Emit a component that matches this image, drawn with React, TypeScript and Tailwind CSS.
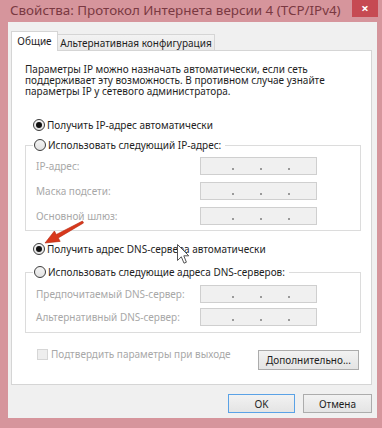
import React from "react";

const Radio = ({ checked }: { checked?: boolean }) => (
  <span className="w-[12px] h-[12px] rounded-full border border-[#3c3c3c] bg-gradient-to-b from-[#f4f4f4] to-[#e2e2e2] flex items-center justify-center shrink-0">
    {checked && <span className="w-[6px] h-[6px] rounded-full bg-[#111]" />}
  </span>
);

const IpBox = () => (
  <div className="w-[117px] h-[18px] border border-[#cfcfcf] bg-[#f0f0f0] flex items-end pl-[31px] gap-[26px] pb-[4px]">
    <span className="w-[2px] h-[2px] bg-[#9a9a9a]" />
    <span className="w-[2px] h-[2px] bg-[#9a9a9a]" />
    <span className="w-[2px] h-[2px] bg-[#9a9a9a]" />
  </div>
);

const FieldRow = ({ label }: { label: string }) => (
  <div className="flex items-center">
    <span className="w-[164px] text-[#a8a8a8] whitespace-nowrap">{label}</span>
    <IpBox />
  </div>
);

export default function App() {
  return (
    <div
      className="w-[382px] h-[428px] bg-[#d6959c] flex flex-col relative overflow-hidden"
      style={{ fontFamily: '"Noto Sans", "Open Sans", sans-serif' }}
    >
      {/* Title bar */}
      <div className="h-[22px] flex items-start shrink-0">
        <div className="pl-[10px] pt-[1px] text-[13.4px] leading-[19px] text-[#7a3942] whitespace-nowrap">
          Свойства: Протокол Интернета версии 4 (TCP/IPv4)
        </div>
        <div className="ml-auto mr-[4px] w-[26px] h-[17px] bg-[#c64a52] flex items-center justify-center text-white text-[13px] leading-none font-bold">
          ×
        </div>
      </div>

      {/* Client */}
      <div className="ml-[8px] mr-[5px] h-[396px] bg-[#f0f0f0] flex flex-col text-[10px] leading-[12px] text-[#1e1e1e] shrink-0">
        {/* Tabs */}
        <div className="mt-[9px] ml-[3px] h-[20px] flex items-end">
          <div className="relative z-10 h-[20px] w-[47px] bg-white border-t border-x border-[#d5d5d5] flex items-center justify-center pb-[1px] whitespace-nowrap">
            Общие
          </div>
          <div className="h-[17px] w-[157px] bg-gradient-to-b from-[#f3f3f3] to-[#e8e8e8] border-t border-r border-[#d5d5d5] flex items-center justify-center whitespace-nowrap">
            Альтернативная конфигурация
          </div>
        </div>

        {/* Panel */}
        <div className="-mt-px ml-[3px] w-[361px] h-[335px] bg-white border border-[#d5d5d5] flex flex-col">
          <div className="mt-[13px] ml-[13px] flex flex-col leading-[11px] whitespace-nowrap">
            <span>Параметры IP можно назначать автоматически, если сеть</span>
            <span>поддерживает эту возможность. В противном случае узнайте</span>
            <span>параметры IP у сетевого администратора.</span>
          </div>

          <div className="mt-[21px] ml-[21px] h-[14px] flex items-center gap-[2px]">
            <Radio checked />
            <span>Получить IP-адрес автоматически</span>
          </div>

          <fieldset className="mt-[6px] ml-[13px] w-[336px] border border-[#dcdcdc] px-0 pb-[5px]">
            <legend className="ml-[7px] pl-[1px] pr-[4px] h-[14px] flex items-center gap-[2px]">
              <Radio />
              <span>Использовать следующий IP-адрес:</span>
            </legend>
            <div className="mt-[5px] pl-[10px] flex flex-col gap-[7px]">
              <FieldRow label="IP-адрес:" />
              <FieldRow label="Маска подсети:" />
              <FieldRow label="Основной шлюз:" />
            </div>
          </fieldset>

          <div className="mt-[11px] ml-[21px] h-[14px] flex items-center gap-[2px]">
            <Radio checked />
            <span>Получить адрес DNS-сервера автоматически</span>
          </div>

          <fieldset className="mt-[9px] ml-[13px] w-[336px] border border-[#dcdcdc] px-0 pb-[6px]">
            <legend className="ml-[7px] pl-[1px] pr-[4px] h-[14px] flex items-center gap-[2px]">
              <Radio />
              <span>Использовать следующие адреса DNS-серверов:</span>
            </legend>
            <div className="mt-[6px] pl-[10px] flex flex-col gap-[5px]">
              <FieldRow label="Предпочитаемый DNS-сервер:" />
              <FieldRow label="Альтернативный DNS-сервер:" />
            </div>
          </fieldset>

          <div className="mt-[16px] ml-[25px] mr-[12px] flex items-start">
            <span className="w-[11px] h-[11px] border border-[#d6d6d6] bg-[#eeeeee] shrink-0" />
            <span className="ml-[3px] -mt-[1px] text-[#a8a8a8] whitespace-nowrap">Подтвердить параметры при выходе</span>
            <div className="ml-auto mt-[1px] w-[101px] h-[20px] border border-[#acacac] bg-gradient-to-b from-[#f2f2f2] to-[#e4e4e4] flex items-center justify-center">
              Дополнительно...
            </div>
          </div>
        </div>

        {/* Bottom buttons */}
        <div className="mt-[9px] mr-[5px] flex justify-end gap-[8px]">
          <div className="w-[67px] h-[19px] border border-[#5aa2e6] bg-gradient-to-b from-[#f2f2f2] to-[#e4e4e4] flex items-center justify-center">
            OK
          </div>
          <div className="w-[69px] h-[19px] border border-[#acacac] bg-gradient-to-b from-[#f2f2f2] to-[#e4e4e4] flex items-center justify-center">
            Отмена
          </div>
        </div>
      </div>

      {/* Red annotation arrow */}
      <svg className="absolute left-0 top-0 pointer-events-none" width="382" height="428">
        <polygon
          points="45,243 54.4,231 56.3,234.5 82.5,221 83.5,223 58.3,237.9 60.2,241.4"
          fill="#d8381c"
          stroke="#b52810"
          strokeWidth="0.6"
          strokeLinejoin="round"
        />
      </svg>

      {/* Mouse cursor */}
      <svg className="absolute pointer-events-none" style={{ left: 177, top: 244 }} width="14" height="22" viewBox="0 0 14 22">
        <path d="M0.5 0.5 L0.5 16.5 L4.3 12.8 L7 19.2 L9.4 18.2 L6.8 11.8 L11.8 11.8 Z" fill="#fff" stroke="#555" strokeWidth="1" strokeLinejoin="round" />
      </svg>
    </div>
  );
}
